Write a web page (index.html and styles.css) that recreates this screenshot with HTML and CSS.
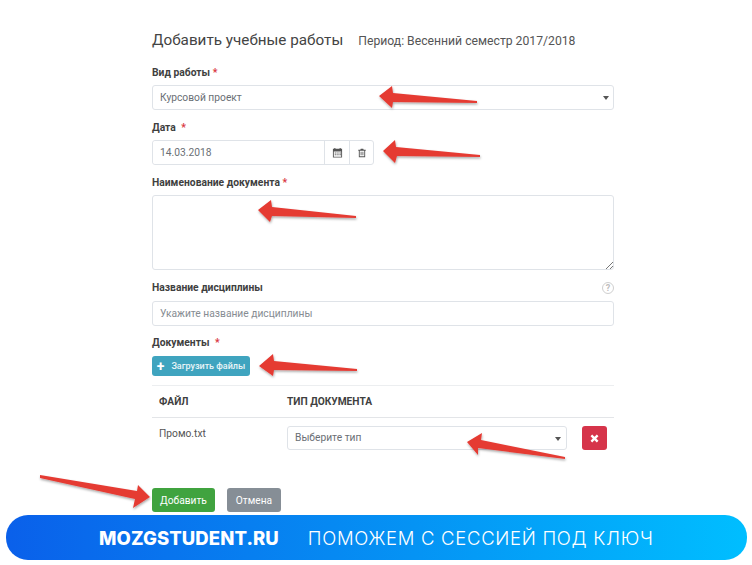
FILE: index.html
```html
<!DOCTYPE html>
<html lang="ru">
<head>
<meta charset="utf-8">
<title>Добавить учебные работы</title>
<link rel="stylesheet" href="styles.css">
</head>
<body>
<div class="page">
  <form class="form">
    <header class="title-row">
      <h1 class="title">Добавить учебные работы</h1>
      <span class="period">Период: Весенний семестр 2017/2018</span>
    </header>

    <div class="field field-type">
      <label class="label">Вид работы <span class="req">*</span></label>
      <div class="control select">Курсовой проект<span class="caret"></span></div>
    </div>

    <div class="field field-date">
      <label class="label">Дата <span class="req req-gap">*</span></label>
      <div class="date-group">
        <div class="control date-input">14.03.2018</div>
        <div class="addon">
          <svg class="ico" viewBox="0 0 12 12" width="11" height="11"><path fill="#555" d="M1 2h1.500V1h1.200v1h4.600V1h1.200v1H11v9.500H1zm1 3v5.500h8V5z"/><path fill="#555" d="M3 6h1.200v1.100H3zm2 0h1.200v1.100H5zm2 0h1.200v1.100H7zm1.900 0H10v1.100H8.900zM3 8h1.200v1.100H3zm2 0h1.200v1.100H5zm2 0h1.200v1.100H7zm1.900 0H10v1.100H8.900z"/></svg>
        </div>
        <div class="addon addon-last">
          <svg class="ico" viewBox="0 0 12 12" width="10" height="10"><path fill="#555" d="M4.500 1h3l.5 1H10.500v1.200h-.7V11H2.200V3.200h-.7V2H4zM3.300 3.200v6.700h5.400V3.200z"/><path fill="#555" d="M4.400 4.500h1v4.200h-1zm2.200 0h1v4.200h-1z"/></svg>
        </div>
      </div>
    </div>

    <div class="field field-name">
      <label class="label">Наименование документа <span class="req">*</span></label>
      <div class="control textarea">
        <svg class="grip" viewBox="0 0 8 8" width="8" height="8"><path stroke="#777" stroke-width="1" fill="none" d="M1 8 8 1M5 8l3-3"/></svg>
      </div>
    </div>

    <div class="field field-subject">
      <div class="label-row">
        <label class="label">Название дисциплины</label>
        <span class="help">?</span>
      </div>
      <div class="control placeholder">Укажите название дисциплины</div>
    </div>

    <div class="field field-docs">
      <label class="label">Документы <span class="req req-gap">*</span></label>
      <button type="button" class="btn btn-upload"><span class="plus">+</span>Загрузить файлы</button>
    </div>

    <div class="table">
      <div class="thead">
        <span class="col-file">ФАЙЛ</span>
        <span class="col-type">ТИП ДОКУМЕНТА</span>
      </div>
      <div class="trow">
        <span class="col-file file-name">Промо.txt</span>
        <div class="control select type-select">Выберите тип<span class="caret"></span></div>
        <button type="button" class="btn-remove">
          <svg viewBox="0 0 10 10" width="9" height="9"><path stroke="#fff" stroke-width="2.600" d="M1.500 1.500l7 7M8.500 1.500l-7 7"/></svg>
        </button>
      </div>
    </div>

    <div class="actions">
      <button type="button" class="btn btn-add">Добавить</button>
      <button type="button" class="btn btn-cancel">Отмена</button>
    </div>
  </form>

  <div class="banner">
    <span class="brand">MOZGSTUDENT.RU</span>
    <span class="slogan">ПОМОЖЕМ С СЕССИЕЙ ПОД КЛЮЧ</span>
  </div>

  <svg class="arrows" viewBox="0 0 752 565" width="752" height="565">
    <defs>
      <filter id="sh" x="-10%" y="-40%" width="120%" height="200%">
        <feDropShadow dx="0.500" dy="1.500" stdDeviation="0.800" flood-color="#000" flood-opacity="0.350"/>
      </filter>
    </defs>
    <g fill="#e53a33" filter="url(#sh)">
      <path d="M379 96 392 86 393 93 477 101 477 103 393 102 392 108z"/>
      <path d="M383 151 395 140 396 147 480 155 480 157 397 156 395 163z"/>
      <path d="M258 210 271 200 272 207 356 216 356 218 272 216 270 222z"/>
      <path d="M259 366 273 354 274 361 357 369 357 371 274 370 273 376z"/>
      <path d="M467 442 482 433 481 440 565 457 565 459 478 448 478 455z"/>
      <path d="M40 475 137 491 138 485 150 497 133 508 135 499 40 478z"/>
    </g>
  </svg>
</div>
</body>
</html>
```

FILE: styles.css
```css
* { box-sizing: border-box; }

html, body {
  margin: 0;
  padding: 0;
  background: #fff;
}

.page {
  position: relative;
  width: 752px;
  height: 565px;
  overflow: hidden;
  font-family: Roboto, "Liberation Sans", sans-serif;
  color: #4a4f55;
}

.form {
  width: 462px;
  margin-left: 152px;
  padding-top: 29px;
}

.title-row {
  display: flex;
  align-items: baseline;
  gap: 15px;
  height: 22px;
}

.title {
  margin: 0;
  font-size: 15.250px;
  line-height: 22px;
  font-weight: 400;
  color: #444;
}

.period {
  font-size: 12.200px;
  color: #555;
}

.field { display: flex; flex-direction: column; }

.label {
  display: block;
  font-size: 10.300px;
  line-height: 14px;
  font-weight: 700;
  color: #3f3f3f;
}

.req { color: #d9363e; }
.req-gap { margin-left: 3px; }

.field-type { margin-top: 15px; }
.field-type .label { margin-bottom: 5px; }
.field-date { margin-top: 11px; }
.field-date .label { margin-bottom: 5px; }
.field-name { margin-top: 11px; }
.field-name .label { margin-bottom: 5px; }
.field-subject { margin-top: 11px; }
.field-docs { margin-top: 10px; align-items: flex-start; }
.field-docs .label { margin-bottom: 6px; }

.label-row {
  display: flex;
  justify-content: space-between;
  align-items: center;
  height: 14px;
  margin-bottom: 6px;
}

.help {
  width: 12px;
  height: 12px;
  border: 1px solid #cfcfcf;
  border-radius: 50%;
  color: #bdbdbd;
  font-size: 9px;
  font-weight: 700;
  line-height: 10px;
  text-align: center;
}

.control {
  position: relative;
  height: 25px;
  padding: 0 7px;
  border: 1px solid #dfe3e8;
  border-radius: 3px;
  background: #fff;
  font-size: 10.250px;
  line-height: 23px;
  color: #6a6f75;
}

.select { padding-right: 20px; }

.caret {
  position: absolute;
  right: 4px;
  top: 10px;
  width: 0;
  height: 0;
  border-left: 3.500px solid transparent;
  border-right: 3.500px solid transparent;
  border-top: 4px solid #555;
}

.date-group {
  display: flex;
  width: 222px;
  height: 25px;
  border: 1px solid #dfe3e8;
  border-radius: 3px;
}

.date-input {
  flex: 1;
  height: 23px;
  border: 0;
  line-height: 23px;
}

.addon {
  display: flex;
  align-items: center;
  justify-content: center;
  width: 25px;
  border-left: 1px solid #dfe3e8;
}

.addon-last { width: 24px; }

.textarea { height: 75px; }

.grip {
  position: absolute;
  right: 0;
  bottom: 0;
}

.placeholder { color: #868c92; }

.btn {
  display: inline-flex;
  align-items: center;
  justify-content: center;
  border: 0;
  border-radius: 3px;
  font-family: inherit;
  color: #fff;
  padding: 0;
}

.btn-upload {
  width: 98px;
  height: 20px;
  background: #3fa4bf;
  font-size: 9px;
  font-weight: 500;
  color: #e8f4f7;
}

.plus {
  margin-right: 7px;
  font-size: 14px;
  line-height: 14px;
  font-weight: 700;
  color: #fff;
}

.table {
  margin-top: 9px;
  border-top: 1px solid #eceef0;
}

.thead {
  display: flex;
  align-items: center;
  height: 32px;
  border-bottom: 1px solid #e3e5e8;
  font-size: 10.200px;
  font-weight: 700;
  color: #3f3f3f;
}

.col-file { width: 128px; margin-left: 7px; }

.trow {
  display: flex;
  align-items: flex-start;
  padding-top: 8px;
  height: 70px;
}

.file-name {
  font-size: 10.250px;
  line-height: 14px;
  margin-top: 1px;
  color: #555;
}

.type-select {
  width: 280px;
  height: 24px;
  margin-right: 15px;
  line-height: 22px;
}

.type-select .caret { right: 5px; }

.btn-remove {
  display: flex;
  align-items: center;
  justify-content: center;
  width: 25px;
  height: 24px;
  padding: 0;
  border: 0;
  border-radius: 3px;
  background: #d6344a;
}

.actions {
  display: flex;
  gap: 12px;
}

.btn-add {
  width: 63px;
  height: 24px;
  background: #40a33f;
  font-size: 10.200px;
  font-weight: 400;
}

.btn-cancel {
  width: 54px;
  height: 24px;
  background: #868e96;
  font-size: 10.200px;
  font-weight: 400;
}

.banner {
  position: absolute;
  left: 6px;
  top: 515px;
  width: 741px;
  height: 45px;
  display: flex;
  align-items: center;
  padding-left: 93px;
  gap: 29px;
  border-radius: 22px;
  background: linear-gradient(90deg, #0a60ea 0%, #0593f4 55%, #00beff 100%);
  color: #fff;
  font-family: Inter, "Liberation Sans", sans-serif;
}

.brand {
  font-size: 18.500px;
  font-weight: 800;
  letter-spacing: 0.080px;
}

.slogan {
  font-size: 18.500px;
  font-weight: 300;
  letter-spacing: 0.700px;
}

.arrows {
  position: absolute;
  left: 0;
  top: 0;
  pointer-events: none;
}
```
